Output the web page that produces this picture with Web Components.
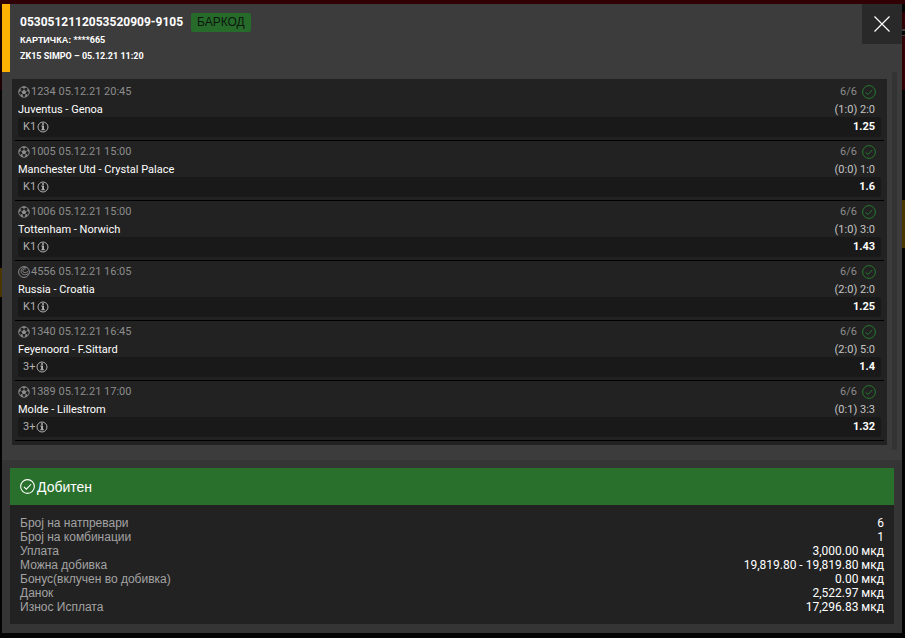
<!DOCTYPE html>
<html lang="mk">
<head>
<meta charset="utf-8">
<title>Тикет</title>
<style>
  html, body { height: 100%; }
  body {
    margin: 0;
    background: #030303;
    font-family: Roboto, "Liberation Sans", sans-serif;
    color: #fff;
  }
  .label {
    font-family: "Liberation Sans", sans-serif;
  }
</style>
</head>
<body>
<ticket-backdrop>
  <ticket-dialog>
    <ticket-header slot="header" number="0530512112053520909-9105">
      <span slot="card"><span class="label">КАРТИЧКА:</span> ****665</span>
      <span slot="place">ZK15 SIMPO – 05.12.21 11:20</span>
    </ticket-header>
    <match-list slot="matches">
      <match-row code="1234" time="05.12.21 20:45" teams="Juventus - Genoa" half="(1:0)" score="2:0" tip="K1" odd="1.25"></match-row>
      <match-row code="1005" time="05.12.21 15:00" teams="Manchester Utd - Crystal Palace" half="(0:0)" score="1:0" tip="K1" odd="1.6"></match-row>
      <match-row code="1006" time="05.12.21 15:00" teams="Tottenham - Norwich" half="(1:0)" score="3:0" tip="K1" odd="1.43"></match-row>
      <match-row sport="tennis" code="4556" time="05.12.21 16:05" teams="Russia - Croatia" half="(2:0)" score="2:0" tip="K1" odd="1.25"></match-row>
      <match-row code="1340" time="05.12.21 16:45" teams="Feyenoord - F.Sittard" half="(2:0)" score="5:0" tip="3+" odd="1.4"></match-row>
      <match-row code="1389" time="05.12.21 17:00" teams="Molde - Lillestrom" half="(0:1)" score="3:3" tip="3+" odd="1.32"></match-row>
    </match-list>
    <ticket-summary slot="summary" status="Добитен">
      <summary-line label="Број на натпревари">6</summary-line>
      <summary-line label="Број на комбинации">1</summary-line>
      <summary-line label="Уплата">3,000.00 мкд</summary-line>
      <summary-line label="Можна добивка">19,819.80 - 19,819.80 мкд</summary-line>
      <summary-line label="Бонус(вклучен во добивка)">0.00 мкд</summary-line>
      <summary-line label="Данок">2,522.97 мкд</summary-line>
      <summary-line label="Износ Исплата">17,296.83 мкд</summary-line>
    </ticket-summary>
  </ticket-dialog>
</ticket-backdrop>

<script>
const icons = {
  football: `<svg viewBox="0 0 24 24"><circle cx="12" cy="12" r="10.6" fill="none" stroke="currentColor" stroke-width="1.8"/><path fill="currentColor" d="M12 7.5l4.6 3.4-1.8 5.3H9.2l-1.8-5.3zM7.5 2.2L12 5l4.5-2.8L12 1zM1.6 12.5l3.8-2.8-.6-5L2 8zM22.4 12.5l-3.8-2.8.6-5L22 8zM5 20l.8-4.4 4 3.4.4 3.6zM19 20l-.8-4.4-4 3.4-.4 3.6z"/><path stroke="currentColor" stroke-width="1.2" d="M12 8V4M16 11l3-1.4M8 11L5 9.6M9.5 16l-2 2.4M14.5 16l2 2.4"/></svg>`,
  tennis: `<svg viewBox="0 0 12 12" fill="none" stroke="currentColor"><circle cx="6" cy="6" r="5.4"/><path d="M8.8 1.5C5.5.8 2.9 3 3.1 5.6c.2 2.7 3.6 4.2 7.1 2.1M7.7 3C5.7 2.5 4.6 3.9 4.9 5.3c.3 1.3 2.7 2 5.3-.1"/></svg>`,
  info: `<svg viewBox="0 0 12 12"><circle cx="6" cy="6" r="5" fill="none" stroke="currentColor"/><path fill="currentColor" d="M5 2.2h2v1.5H5zM4.3 4.6H7v3.7h.9v1H4.2v-1h.9V5.6h-.8z"/></svg>`,
  check: `<svg viewBox="0 0 14 14" fill="none" stroke="currentColor"><circle cx="7" cy="7" r="6.4"/><path d="M3.7 7.4l2.2 2.1 4.4-4.6"/></svg>`,
  close: `<svg viewBox="0 0 16 16" fill="none" stroke="currentColor" stroke-width="1.2"><path d="M.5.5l15 15M15.5.5l-15 15"/></svg>`
};

class BaseElement extends HTMLElement {
  constructor() {
    super();
    this.attachShadow({ mode: 'open' });
  }

  connectedCallback() {
    this.shadowRoot.innerHTML = this.render();
  }

  attr(name) {
    return this.getAttribute(name) || '';
  }
}

class TicketBackdrop extends BaseElement {
  render() {
    // the dimmed page shows as coloured strips around the dialog
    return `
      <style>
        :host {
          display: block;
          box-sizing: border-box;
          min-height: 100%;
          padding: 4px 3px 5px 2px;
          background:
            linear-gradient(#310004, #310004) 0 0 / 100% 4px no-repeat,
            linear-gradient(#030303 12px, #310004 12px 29px, #444 29px 31px, #030303 31px 35px, #444 35px 36px, #310004 36px 90px, #030303 90px 200px, #4b3500 200px 248px, #030303 248px) right top / 3px 100% no-repeat,
            linear-gradient(#1c0003 90px, #030303 90px 268px, #4b3500 268px 297px, #030303 297px) left top / 2px 100% no-repeat,
            #030303;
        }
      </style>
      <slot></slot>
    `;
  }
}

class TicketDialog extends BaseElement {
  render() {
    return `
      <style>
        :host {
          display: flex;
          flex-direction: column;
          background: #3c3c3c;
        }
        .body {
          display: flex;
          justify-content: space-between;
          padding: 0 5px 10px 10px;
        }
        ::slotted(match-list) {
          flex: 1;
          margin: 7px 5px 5px 0;
        }
        .scrollbar {
          width: 5px;
          border-radius: 3px;
          background: #333;
        }
      </style>
      <slot name="header"></slot>
      <div class="body">
        <slot name="matches"></slot>
        <div class="scrollbar"></div>
      </div>
      <slot name="summary"></slot>
    `;
  }
}

class TicketHeader extends BaseElement {
  render() {
    return `
      <style>
        :host {
          display: flex;
          align-items: flex-start;
          justify-content: space-between;
          height: 68px;
        }
        .info {
          box-sizing: border-box;
          height: 100%;
          padding: 8px 10px 0;
          border-left: 8px solid #ffb000;
          font-size: 9px;
          font-weight: 700;
          line-height: 16px;
        }
        .title {
          display: flex;
          align-items: center;
          gap: 8px;
          height: 20px;
        }
        h1 {
          margin: 0;
          font-size: 12px;
        }
        .barcode {
          height: 19px;
          padding: 0 6px;
          border: 0;
          border-radius: 2px;
          background: #276b2b;
          color: #0b160c;
          font: 12px "Liberation Sans", sans-serif;
        }
        ::slotted(span) {
          display: block;
        }
        .close {
          display: flex;
          align-items: center;
          justify-content: center;
          width: 40px;
          height: 40px;
          padding: 0;
          border: 0;
          background: #292929;
          color: #fff;
        }
        .close svg {
          width: 16px;
          height: 16px;
        }
      </style>
      <div class="info">
        <div class="title">
          <h1>${this.attr('number')}</h1>
          <button class="barcode" type="button">БАРКОД</button>
        </div>
        <slot name="card"></slot>
        <slot name="place"></slot>
      </div>
      <button class="close" type="button" aria-label="Затвори">${icons.close}</button>
    `;
  }
}

class MatchList extends BaseElement {
  render() {
    return `
      <style>
        :host {
          display: block;
          padding: 2px 3px 4px;
          background: #222;
        }
      </style>
      <slot></slot>
    `;
  }
}

class MatchRow extends BaseElement {
  render() {
    const icon = this.attr('sport') === 'tennis' ? icons.tennis : icons.football;
    return `
      <style>
        :host {
          display: block;
          padding: 2px 3px 3px;
          border-bottom: 1px solid #000;
          font-size: 11px;
          line-height: 18px;
        }
        .line {
          display: flex;
          justify-content: space-between;
          padding-right: 6px;
        }
        .line > span {
          display: flex;
          align-items: center;
          gap: 1px;
        }
        .line.meta {
          padding-right: 5px;
          color: #8c8c8c;
        }
        .meta .count {
          gap: 5px;
        }
        .teams {
          height: 16px;
          line-height: 20px;
        }
        .teams > span {
          height: 18px;
        }
        .result {
          color: #c4c4c4;
        }
        .line.pick {
          height: 20px;
          padding: 0 6px 0 5px;
          border-radius: 3px;
          background: #191919;
          color: #b0b0b0;
        }
        .pick .odd {
          color: #fff;
          font-weight: 700;
        }
        svg {
          width: 12px;
          height: 12px;
        }
        .count svg {
          width: 14px;
          height: 14px;
          color: #287a2e;
        }
      </style>
      <div class="line meta">
        <span>${icon}${this.attr('code')} ${this.attr('time')}</span>
        <span class="count">6/6 ${icons.check}</span>
      </div>
      <div class="line teams">
        <span>${this.attr('teams')}</span>
        <span class="result">${this.attr('half')} ${this.attr('score')}</span>
      </div>
      <div class="line pick">
        <span>${this.attr('tip')} ${icons.info}</span>
        <span class="odd">${this.attr('odd')}</span>
      </div>
    `;
  }
}

class TicketSummary extends BaseElement {
  render() {
    return `
      <style>
        :host {
          display: block;
          padding: 8px 8px 9px;
          background: #353535;
        }
        .status {
          display: flex;
          align-items: center;
          gap: 2px;
          height: 37px;
          padding: 0 10px;
          background: #29702c;
          font: 14px/18px "Liberation Sans", sans-serif;
        }
        .status svg {
          width: 15px;
          height: 15px;
        }
        .lines {
          padding: 11px 10px 10px;
          background: #222;
        }
      </style>
      <div class="status">${icons.check}<span>${this.attr('status')}</span></div>
      <div class="lines"><slot></slot></div>
    `;
  }
}

class SummaryLine extends BaseElement {
  render() {
    return `
      <style>
        :host {
          display: flex;
          justify-content: space-between;
          font-size: 12px;
          line-height: 14px;
        }
        .label {
          color: #a3a3a3;
          font-family: "Liberation Sans", sans-serif;
        }
      </style>
      <span class="label">${this.attr('label')}</span>
      <span><slot></slot></span>
    `;
  }
}

customElements.define('ticket-backdrop', TicketBackdrop);
customElements.define('ticket-dialog', TicketDialog);
customElements.define('ticket-header', TicketHeader);
customElements.define('match-list', MatchList);
customElements.define('match-row', MatchRow);
customElements.define('ticket-summary', TicketSummary);
customElements.define('summary-line', SummaryLine);
</script>
</body>
</html>
